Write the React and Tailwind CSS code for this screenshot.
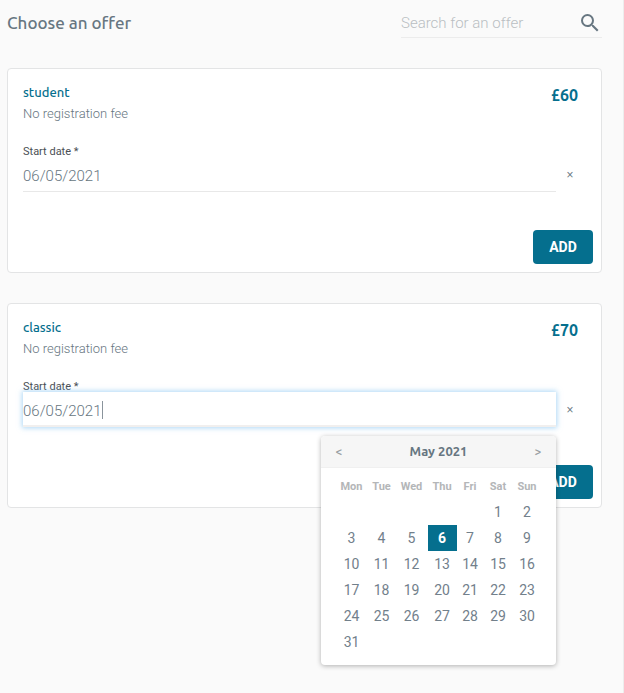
import { useState } from "react";
import { MdSearch } from "react-icons/md";

const OFFERS = [
    { id: "student", name: "student", fee: "No registration fee", price: "£60" },
    { id: "classic", name: "classic", fee: "No registration fee", price: "£70" },
];

const WEEKDAYS = [
    { label: "Mon", width: "w-[32px]" },
    { label: "Tue", width: "w-[28px]" },
    { label: "Wed", width: "w-[32px]" },
    { label: "Thu", width: "w-[29px]" },
    { label: "Fri", width: "w-[27px]" },
    { label: "Sat", width: "w-[29px]" },
    { label: "Sun", width: "w-[29px]" },
];

const WEEKS = [
    [null, null, null, null, null, 1, 2],
    [3, 4, 5, 6, 7, 8, 9],
    [10, 11, 12, 13, 14, 15, 16],
    [17, 18, 19, 20, 21, 22, 23],
    [24, 25, 26, 27, 28, 29, 30],
    [31, null, null, null, null, null, null],
];

function Calendar({ selected, onSelect }) {
    return (
        <div className="absolute top-full right-0 z-10 mt-[9px] w-[235px] rounded-[4px] bg-white pb-[10px] shadow-[0_1px_5px_rgba(0,0,0,0.3)]">
            <div className="flex h-8 items-center justify-between rounded-t-[4px] border-b border-[#f0f0f0] bg-[#f6f6f6] px-3 font-['Ubuntu','Noto_Sans',sans-serif] text-[#677681]">
                <button type="button" aria-label="Previous month" className="w-3 text-xs font-medium text-[#9a9fa3]">
                    &lt;
                </button>
                <h3 className="text-[13px] font-semibold">May 2021</h3>
                <button type="button" aria-label="Next month" className="w-3 text-xs font-medium text-[#9a9fa3]">
                    &gt;
                </button>
            </div>
            <table className="mx-auto mt-2 w-[206px] table-fixed border-collapse text-center">
                <thead>
                    <tr className="h-[23px]">
                        {WEEKDAYS.map((d) => (
                            <th key={d.label} className={`${d.width} p-0 text-[11px] font-bold text-[#b4b6b8]`}>
                                {d.label}
                            </th>
                        ))}
                    </tr>
                </thead>
                <tbody>
                    {WEEKS.map((week, i) => (
                        <tr key={i} className="h-[26px]">
                            {week.map((day, j) => (
                                <td key={j} className="p-0">
                                    {day && (
                                        <button
                                            type="button"
                                            onClick={() => onSelect(day)}
                                            className={
                                                day === selected
                                                    ? "block h-[26px] w-full bg-[#056f8e] text-sm font-bold text-white"
                                                    : "block h-[26px] w-full text-sm text-[#72808b]"
                                            }
                                        >
                                            {day}
                                        </button>
                                    )}
                                </td>
                            ))}
                        </tr>
                    ))}
                </tbody>
            </table>
        </div>
    );
}

function OfferCard({ offer, open, onOpen, onClose }) {
    const [day, setDay] = useState(6);
    const inputId = `start-date-${offer.id}`;
    const value = day ? `${String(day).padStart(2, "0")}/05/2021` : "";

    return (
        <section className="rounded-[4px] border border-[#e3e4e5] bg-white pt-3 pb-2">
            <div className="flex justify-between pr-[23px] pl-[15px]">
                <div>
                    <h2 className="font-['Ubuntu','Noto_Sans',sans-serif] text-[13px] leading-[22px] font-medium text-[#056f8e]">
                        {offer.name}
                    </h2>
                    <p className="text-[13px] leading-[22px] font-light text-[#677681]">{offer.fee}</p>
                </div>
                <p className="font-['Ubuntu','Noto_Sans',sans-serif] text-base leading-7 font-bold text-[#056f8e]">
                    {offer.price}
                </p>
            </div>

            <div className="mt-[22px] flex items-end pr-[25px] pl-[15px]">
                <div className="relative flex-1">
                    <label htmlFor={inputId} className="block text-[11px] leading-[10px] text-[#4a4f54]">
                        Start date *
                    </label>
                    <input
                        id={inputId}
                        type="text"
                        readOnly
                        value={value}
                        onFocus={onOpen}
                        className={
                            open
                                ? "relative block h-[35px] w-full border-b-2 border-[#f1efee] bg-white pt-1 text-[15px] font-light text-[#677681] shadow-[0_0_5px_1px_rgba(120,190,240,0.6)] outline-none"
                                : "block h-[35px] w-full border-b border-[#e8e8e8] bg-white pt-1 text-[15px] font-light text-[#677681] outline-none"
                        }
                    />
                    {open && (
                        <div className="pointer-events-none absolute bottom-2 left-0 flex h-[18px] text-[15px] font-light" aria-hidden="true">
                            <span className="invisible">{value}</span>
                            <span className="w-px bg-[#8a949c]" />
                        </div>
                    )}
                    {open && (
                        <Calendar
                            selected={day}
                            onSelect={(d) => {
                                setDay(d);
                                onClose();
                            }}
                        />
                    )}
                </div>
                <button
                    type="button"
                    aria-label="Clear date"
                    onClick={() => setDay(null)}
                    className="ml-2 h-9 w-3 font-['Ubuntu','Noto_Sans',sans-serif] text-sm text-[#677681]"
                >
                    ×
                </button>
            </div>

            <div className="mt-[38px] flex justify-end pr-2">
                <button type="button" className="h-[34px] w-[60px] rounded-[4px] bg-[#056f8e] text-sm font-bold text-white">
                    ADD
                </button>
            </div>
        </section>
    );
}

export default function App() {
    const [openId, setOpenId] = useState("classic");

    return (
        <main className="min-h-screen border-r border-[#ededed] bg-[#fafafa] pr-[21px] pl-[7px] font-['Roboto',sans-serif]">
            <header className="flex items-center justify-between pt-2">
                <h1 className="font-['Ubuntu','Noto_Sans',sans-serif] text-[17px] font-medium text-[#677681]">
                    Choose an offer
                </h1>
                <div className="flex h-[30px] w-[201px] items-center border-b border-[#ececec]">
                    <input
                        type="search"
                        aria-label="Search for an offer"
                        placeholder="Search for an offer"
                        className="min-w-0 flex-1 bg-transparent pt-[2px] text-[15px] font-light outline-none placeholder:text-[#b9bec2]"
                    />
                    <button type="button" aria-label="Search" className="text-[#677681]">
                        <MdSearch size={24} />
                    </button>
                </div>
            </header>

            <div className="mt-[30px] flex flex-col gap-[30px]">
                {OFFERS.map((offer) => (
                    <OfferCard
                        key={offer.id}
                        offer={offer}
                        open={openId === offer.id}
                        onOpen={() => setOpenId(offer.id)}
                        onClose={() => setOpenId(null)}
                    />
                ))}
            </div>
        </main>
    );
}
